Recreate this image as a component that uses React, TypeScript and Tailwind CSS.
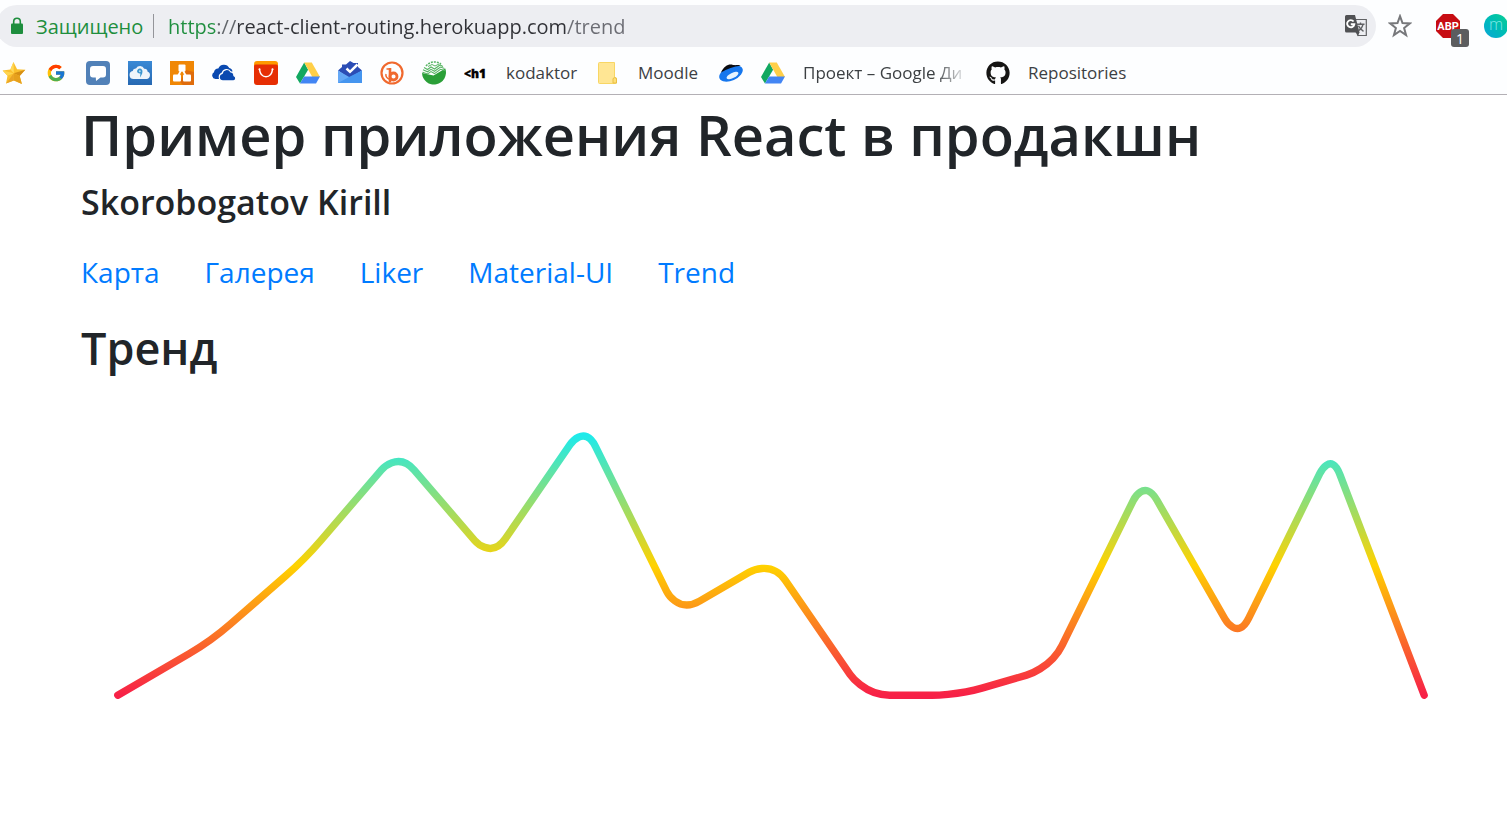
import React from "react";
import { FcGoogle } from "react-icons/fc";
import { FaGithub } from "react-icons/fa";

type IconProps = { children: React.ReactNode; viewBox?: string };

function Glyph({ children, viewBox = "0 0 24 24" }: IconProps) {
  return (
    <svg viewBox={viewBox} className="size-6 shrink-0" aria-hidden="true">
      {children}
    </svg>
  );
}

const StarIcon = () => (
  <Glyph>
    <path d="M11.5 1l3.6 7.2 8.2.6-5.6 6.3 2.2 7.9-8-3.6L4 22.6l1.5-7.8L.6 9.4l7.8-.9z" fill="#fbc02d" />
    <path d="M11.5 1l.3 11.2L8.4 8.5z" fill="#ffd95a" />
    <path d="M.6 9.4l11.2 2.8-6.3 2.6z" fill="#ffd54f" />
    <path d="M23.3 8.8l-11.5 3.4 5.9 2.9z" fill="#d68f16" />
    <path d="M17.7 15.1l-5.9-2.9.1 7.2 8 3.6z" fill="#e6a01d" />
    <path d="M4 22.6l7.8-10.4.1 7.2z" fill="#e9a426" />
  </Glyph>
);

const GoogleIcon = () => (
  <span className="flex size-6 shrink-0 items-center justify-center">
    <FcGoogle size={20} />
  </span>
);

const ChatIcon = () => (
  <Glyph>
    <rect width="24" height="24" rx="4" fill="#5181b8" />
    <path d="M7 5h10a3 3 0 013 3v5.500a3 3 0 01-3 3h-2.500L10 20l-.2-3.500H7a3 3 0 01-3-3V8a3 3 0 013-3z" fill="#fff" />
  </Glyph>
);

const CloudPinIcon = () => (
  <Glyph>
    <defs>
      <linearGradient id="cloudSky" x1="0" y1="0" x2="0" y2="1">
        <stop offset="0" stopColor="#3a8ad6" />
        <stop offset="1" stopColor="#2668b2" />
      </linearGradient>
    </defs>
    <rect width="24" height="24" fill="url(#cloudSky)" />
    <path d="M5.500 18a4 4 0 01-.8-7.900 3 3 0 013.300-2.600 4.600 4.600 0 018.200.2 3 3 0 013.300 2.800A3.900 3.900 0 0118.500 18z" fill="#eef4fa" />
    <path d="M12 16.500c1-2 2.400-3.700 2.400-5.600a2.700 2.700 0 10-5.300-.3c0 1.200 1.300 2 3.300 1.800z" fill="#3a95cf" />
    <circle cx="11.800" cy="10.300" r="1" fill="#b9dbef" />
  </Glyph>
);

const DiagramIcon = () => (
  <Glyph>
    <rect width="24" height="24" fill="#f08705" />
    <path d="M24 11v13H13l-3-3 6-12z" fill="#df6c0c" />
    <path d="M11 9.500L7.500 16M13 9.500l3.500 6.500" stroke="#fff" strokeWidth="1.800" />
    <rect x="8.500" y="3.500" width="7" height="7" rx="1" fill="#fff" />
    <rect x="3" y="13.500" width="8" height="7" rx="1" fill="#fff" />
    <rect x="13" y="13.500" width="8" height="7" rx="1" fill="#fff" />
  </Glyph>
);

const OneDriveIcon = () => (
  <Glyph>
    <path d="M3.500 18A3.600 3.600 0 012 11.300 4 4 0 016.300 7.500a6 6 0 0111-.5c2 .4 3 1.700 3.200 3.600L9 11.800 7.500 18z" fill="#0a49b0" />
    <path d="M10.800 19.900a3.800 3.800 0 01-.6-7.500 4.600 4.600 0 018.600-1.400 3.700 3.700 0 013.100 3.700 2.700 2.700 0 01-.4 5.200z" fill="#0a49b0" stroke="#fdfeff" strokeWidth="1.100" />
  </Glyph>
);

const ShopIcon = () => (
  <Glyph>
    <rect width="24" height="23" rx="3" fill="#ff9a00" />
    <path d="M0 5.500C0 4 1 3.500 2.500 3.500h19C23 3.500 24 4 24 5.500V21a3 3 0 01-3 3H3a3 3 0 01-3-3z" fill="#e62e04" />
    <path d="M5.500 8.500c.6 4.700 3.100 7.200 6.500 7.200s5.900-2.500 6.500-7.200" fill="none" stroke="#fff" strokeWidth="1.500" strokeLinecap="round" />
    <circle cx="5.500" cy="8.300" r="1" fill="#fff" />
    <circle cx="18.500" cy="8.300" r="1" fill="#fff" />
  </Glyph>
);

const DriveIcon = () => (
  <Glyph>
    <path d="M8.200 1.500L0 16l4 6.500L12.100 8.700z" fill="#11a861" />
    <path d="M8.200 1.500h7.600L24 16h-7.700z" fill="#ffcf48" />
    <path d="M8.100 15.500H24l-4 7H4z" fill="#4285f4" />
  </Glyph>
);

const InboxIcon = () => (
  <Glyph>
    <path d="M12 0l3.500 2h4.500v4L24 9.500 12 18 0 9.500 4 6V3.500h4z" fill="#2b4db5" />
    <path d="M0 9.500l12 7 12-7V22H0z" fill="#64a8f6" />
    <path d="M0 22l12-6.500L24 9.500V22z" fill="#4595ef" />
    <path d="M8.500 7.500l3.500 3.300L19.500 3.500" fill="none" stroke="#fff" strokeWidth="2.500" />
  </Glyph>
);

const BitlyIcon = () => (
  <Glyph>
    <circle cx="12" cy="12" r="10.500" fill="none" stroke="#f0692e" strokeWidth="2.200" />
    <path d="M6.500 8h3.500v10.500c-3-1-4.500-3-4-5.500" fill="none" stroke="#f0692e" strokeWidth="1.500" />
    <path d="M10 7v14" stroke="#f0692e" strokeWidth="2.600" />
    <circle cx="13.500" cy="15.500" r="3.500" fill="none" stroke="#f0692e" strokeWidth="2.800" />
  </Glyph>
);

const SberIcon = () => (
  <Glyph>
    <path d="M0 12l11.500 2.500L23.300 7.500A12 12 0 1 1 0 12z" fill="#2a9f38" />
    <path
      d="M2 6.500l3.500 2L9 6l3.500 2L18 4l3 1.500M1 8.800l4.500 2L9 8.300l3.500 2 6-4.300 4 1.500M.5 11.200l5 1.800L9 10.600l3.500 2 6-4.300 4.500 1.200"
      fill="none"
      stroke="#58b564"
      strokeWidth="1.100"
    />
    <path d="M4 5C8 0 15 0 19 3" fill="none" stroke="#58b564" strokeWidth="1.600" strokeDasharray="2 1" />
    <path d="M6 5.500l4-2 3 1.500 4-2" fill="none" stroke="#58b564" strokeWidth="1" />
  </Glyph>
);

const HeadingTagIcon = () => (
  <Glyph>
    <text x="0" y="17" fontFamily="Open Sans, sans-serif" fontSize="12" fontWeight="800" fill="#000" stroke="#000" strokeWidth="0.400">
      &lt;h1
    </text>
  </Glyph>
);

const FolderIcon = () => (
  <Glyph>
    <path d="M3.500 1.500h15v15l2 .5v4.500a1 1 0 01-1 1h-16a1 1 0 01-1-1v-19a1 1 0 011-1z" fill="#ffe694" stroke="#f8d664" />
    <path d="M17 22v-4a1.800 1.800 0 013.500 0v4z" fill="#ffdf78" stroke="#e8bf45" />
  </Glyph>
);

const SaucerIcon = () => (
  <Glyph>
    <ellipse cx="12" cy="12.500" rx="12.500" ry="7" transform="rotate(-24 12 12.500)" fill="#1677ee" />
    <path d="M2 11.500C5 5 10 2.500 14 4c3 .5 6-.5 7.500.8C15 5.500 8 8 2 11.500z" fill="#0b0b10" />
    <ellipse cx="13.500" cy="14.500" rx="6.500" ry="2.600" transform="rotate(-26 13.500 14.500)" fill="#e6f4ff" />
  </Glyph>
);

type Bookmark = { name: string; icon: React.ReactNode; label?: string; labelClass?: string };

const bookmarks: Bookmark[] = [
  { name: "Favourites", icon: <StarIcon /> },
  { name: "Google", icon: <GoogleIcon /> },
  { name: "Messages", icon: <ChatIcon /> },
  { name: "Cloud", icon: <CloudPinIcon /> },
  { name: "Diagrams", icon: <DiagramIcon /> },
  { name: "OneDrive", icon: <OneDriveIcon /> },
  { name: "Shop", icon: <ShopIcon /> },
  { name: "Drive", icon: <DriveIcon /> },
  { name: "Inbox", icon: <InboxIcon /> },
  { name: "Bitly", icon: <BitlyIcon /> },
  { name: "Bank", icon: <SberIcon /> },
  { name: "kodaktor", icon: <HeadingTagIcon />, label: "kodaktor", labelClass: "w-[72px]" },
  { name: "Moodle", icon: <FolderIcon />, label: "Moodle", labelClass: "w-[63px]" },
  { name: "Planet", icon: <SaucerIcon /> },
  {
    name: "Проект – Google Ди",
    icon: <DriveIcon />,
    label: "Проект – Google Ди",
    labelClass: "w-[165px] mask-r-from-80% mask-r-to-100%",
  },
  { name: "Repositories", icon: <FaGithub size={24} color="#161514" className="shrink-0" />, label: "Repositories", labelClass: "" },
];

function TranslateIcon() {
  return (
    <svg viewBox="0 0 22 22" className="size-[22px]" aria-hidden="true">
      <path d="M10 4.500h11.300v16h-8.800" fill="none" stroke="#606164" strokeWidth="1.200" />
      <path d="M1.500 0h8.500l4.500 17.500h-13A1.500 1.500 0 010 16V1.500A1.500 1.500 0 011.500 0z" fill="#505154" />
      <path d="M10.500 17h4l-1.500 4.500z" fill="#505154" />
      <path d="M8.600 6.500a3.600 3.600 0 10.700 2.800H5.800" fill="none" stroke="#fff" strokeWidth="1.900" />
      <path d="M11.500 9.200h8M15.500 7.500V9M18 9.200c-.5 3-2 5-4.500 6.500M13.500 10.800c1 2.500 2.500 4 5 5.500" fill="none" stroke="#606164" strokeWidth="1.400" />
    </svg>
  );
}

function AddressBar() {
  return (
    <div className="flex h-[42px] items-center">
      <div className="-ml-1 flex h-full min-w-0 flex-1 items-center rounded-full bg-[#edeef2] pr-[9px] pl-[14px]">
        <svg viewBox="0 0 14 18" className="h-[18px] w-[14px] shrink-0" aria-hidden="true">
          <rect x="1" y="6.500" width="12" height="10.500" rx="1" fill="#1e8e3e" />
          <path d="M3.700 7V4.500a3.300 3.300 0 016.600 0V7" fill="none" stroke="#1e8e3e" strokeWidth="1.600" />
        </svg>
        <button type="button" className="ml-3 w-[117px] shrink-0 pt-px text-left text-[20px] text-[#1e8e3e]">
          Защищено
        </button>
        <span className="h-6 w-px shrink-0 bg-[#94959a]" />
        <input
          type="text"
          aria-label="Адрес"
          spellCheck={false}
          defaultValue="https://react-client-routing.herokuapp.com/trend"
          className="ml-[14px] min-w-0 flex-1 bg-[linear-gradient(90deg,#1e8e3e_48px,#5f6368_48px,#5f6368_68px,#303136_68px,#303136_399px,#6b6c73_399px)] bg-clip-text pt-px text-[20px] text-transparent caret-[#303136] outline-none"
        />
        <button type="button" aria-label="Перевести страницу" className="shrink-0">
          <TranslateIcon />
        </button>
      </div>
      <button type="button" aria-label="Добавить в закладки" className="ml-3 shrink-0">
        <svg viewBox="0 0 24 24" className="size-6" aria-hidden="true">
          <path d="M12 2.200l2.500 6.900 7.300.3-5.700 4.600 2 7.100-6.100-4.100-6.100 4.100 2-7.100-5.700-4.600 7.300-.3z" fill="none" stroke="#77787b" strokeWidth="2" />
        </svg>
      </button>
      <button type="button" aria-label="AdBlock Plus" className="relative ml-6 size-6 shrink-0">
        <svg viewBox="0 0 24 24" className="size-6" aria-hidden="true">
          <path d="M7 0h10l7 7v10l-7 7H7l-7-7V7z" fill="#c70d13" />
          <text x="12" y="15.500" textAnchor="middle" fontFamily="Roboto, Liberation Sans, sans-serif" fontSize="11" fontWeight="700" fill="#fff">
            ABP
          </text>
        </svg>
        <span className="absolute top-[15px] left-[15px] flex h-[18px] w-[18px] items-center justify-center rounded-[3px] bg-[#5c5d5f] pt-px text-[14px] leading-none text-white">
          1
        </span>
      </button>
      <button
        type="button"
        aria-label="Профиль"
        className="-mr-px ml-6 flex size-6 shrink-0 items-center justify-center rounded-full bg-linear-to-tr from-[#0fa5d8] to-[#10cf8f] text-[16px] leading-none font-light text-[#7fe8e8]"
      >
        <span className="-mt-1">m</span>
      </button>
    </div>
  );
}

function BookmarksBar() {
  return (
    <nav aria-label="Закладки" className="flex h-[47px] items-center gap-[18px] pt-1 pl-[2px] text-[17px] leading-6 text-[#3c4043]">
      {bookmarks.map((b, i) => (
        <a key={i} href="#" aria-label={b.name} className="flex shrink-0 items-center gap-[18px]">
          {b.icon}
          {b.label && <span className={"whitespace-nowrap " + b.labelClass}>{b.label}</span>}
        </a>
      ))}
    </nav>
  );
}

const data = [0, 2, 5, 9, 5, 10, 3, 5, 0, 0, 1, 8, 2, 9, 0];

type Point = { x: number; y: number };

function towards(from: Point, to: Point, radius: number): Point {
  const length = Math.hypot(to.x - from.x, to.y - from.y);
  return {
    x: from.x + ((to.x - from.x) * radius) / length,
    y: from.y + ((to.y - from.y) * radius) / length,
  };
}

function smoothPath(values: number[], width: number, height: number, padding: number, radius: number) {
  const max = Math.max(...values);
  const points = values.map((v, i) => ({
    x: padding + (i * (width - 2 * padding)) / (values.length - 1),
    y: height - padding - (v / max) * (height - 2 * padding),
  }));
  const last = points[points.length - 1];
  const corners = points.slice(1, -1).map((p, i) => {
    const before = towards(p, points[i], radius);
    const after = towards(p, points[i + 2], radius);
    return `L${before.x},${before.y} S${p.x},${p.y} ${after.x},${after.y}`;
  });
  return `M${points[0].x},${points[0].y} ${corners.join(" ")} L${last.x},${last.y}`;
}

function Trend() {
  return (
    <svg viewBox="0 0 300 75" className="block w-full" role="img" aria-label="Тренд">
      <defs>
        <linearGradient id="trend" x1="0" y1="0" x2="0" y2="1">
          <stop offset="0" stopColor="#1feaea" />
          <stop offset="0.5" stopColor="#ffd200" />
          <stop offset="1" stopColor="#f72047" />
        </linearGradient>
      </defs>
      <path
        d={smoothPath(data, 300, 75, 8, 5.5)}
        fill="none"
        stroke="url(#trend)"
        strokeWidth="1.6"
        strokeLinecap="round"
      />
    </svg>
  );
}

const links = ["Карта", "Галерея", "Liker", "Material-UI", "Trend"];

export default function App() {
  return (
    <div className="min-h-screen overflow-x-hidden bg-white font-['Open_Sans','Noto_Sans',sans-serif] text-[#212529]">
      <header className="border-b border-[#b3b0b5] bg-[#fdfeff] pt-[5px]">
        <AddressBar />
        <BookmarksBar />
      </header>
      <main className="pr-[46px] pl-[81px]">
        <h1 className="pt-[3px] text-[56px] leading-[72px] font-semibold">Пример приложения React в продакшн</h1>
        <h2 className="mt-[10px] text-[34px] leading-[44px] font-semibold">Skorobogatov Kirill</h2>
        <nav className="mt-[26px] flex gap-[45px] text-[28px] leading-[44px] text-[#007bff]">
          {links.map((l) => (
            <a key={l} href="#">
              {l}
            </a>
          ))}
        </nav>
        <h2 className="mt-6 mb-[9px] text-[45px] leading-[60px] font-semibold">Тренд</h2>
        <Trend />
      </main>
    </div>
  );
}
